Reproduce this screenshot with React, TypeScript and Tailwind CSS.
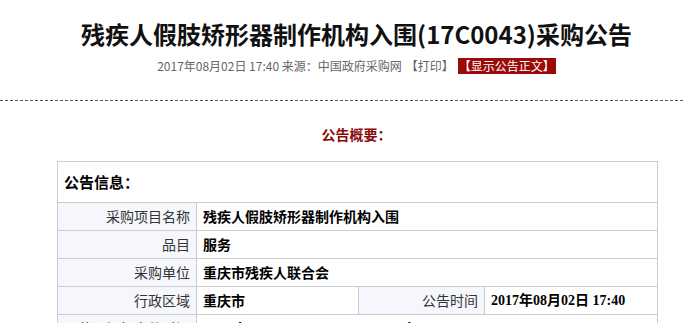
const ROWS = [
  { label: '采购项目名称', value: '残疾人假肢矫形器制作机构入围' },
  { label: '品目', value: '服务' },
  { label: '采购单位', value: '重庆市残疾人联合会' },
];

export default function App() {
  const label = 'bg-[#f5f7fd] text-right pr-[6px] font-normal text-[#333] border border-[#cccccc]';
  const value = 'text-left pl-[6px] font-bold text-black border border-[#cccccc]';

  return (
    <div className="w-[683px] h-[323px] overflow-hidden bg-white font-['Noto_Sans_CJK_SC',sans-serif]">
      {/* Header */}
      <div className="pt-[17px] pl-[30px] text-center">
        <h1 className="text-[24px] leading-[34px] font-bold text-[#111]">
          残疾人假肢矫形器制作机构入围(17C0043)采购公告
        </h1>
        <div className="mt-[7px] text-[12px] leading-[16px] text-[#666] flex justify-center items-center gap-[4px]">
          <span>2017年08月02日 17:40 来源：中国政府采购网</span>
          <span>【打印】</span>
          <span className="bg-[#9b0a0a] text-white px-[1px]">【显示公告正文】</span>
        </div>
      </div>

      <div className="mt-[26px] border-t border-dashed border-[#555]" />

      <div className="mt-[23px] pl-[30px] text-center text-[14px] leading-[20px] font-bold text-[#8b0a0a]">公告概要：</div>

      {/* Table */}
      <table className="ml-[57px] mt-[17px] w-[600px] border-collapse text-[14px] table-fixed">
        <colgroup>
          <col className="w-[139px]" />
          <col className="w-[162px]" />
          <col className="w-[126px]" />
          <col className="w-[173px]" />
        </colgroup>
        <tbody>
          <tr className="h-[41px]">
            <td colSpan={4} className="border border-[#cccccc] pl-[6px] font-bold text-[15px] text-black">公告信息：</td>
          </tr>
          {ROWS.map(r => (
            <tr key={r.label} className="h-[28px]">
              <td className={label}>{r.label}</td>
              <td colSpan={3} className={value}>{r.value}</td>
            </tr>
          ))}
          <tr className="h-[28px]">
            <td className={label}>行政区域</td>
            <td className={value}>重庆市</td>
            <td className={label}>公告时间</td>
            <td className={`${value} font-['Liberation_Serif','Noto_Sans_CJK_SC',serif]`}>2017年08月02日 17:40</td>
          </tr>
          <tr className="h-[28px]">
            <td className={label}>获取招标文件时间</td>
            <td colSpan={3} className={value}>2017年08月02日 09:00 至 2017年08月09日 16:00</td>
          </tr>
        </tbody>
      </table>
    </div>
  );
}
